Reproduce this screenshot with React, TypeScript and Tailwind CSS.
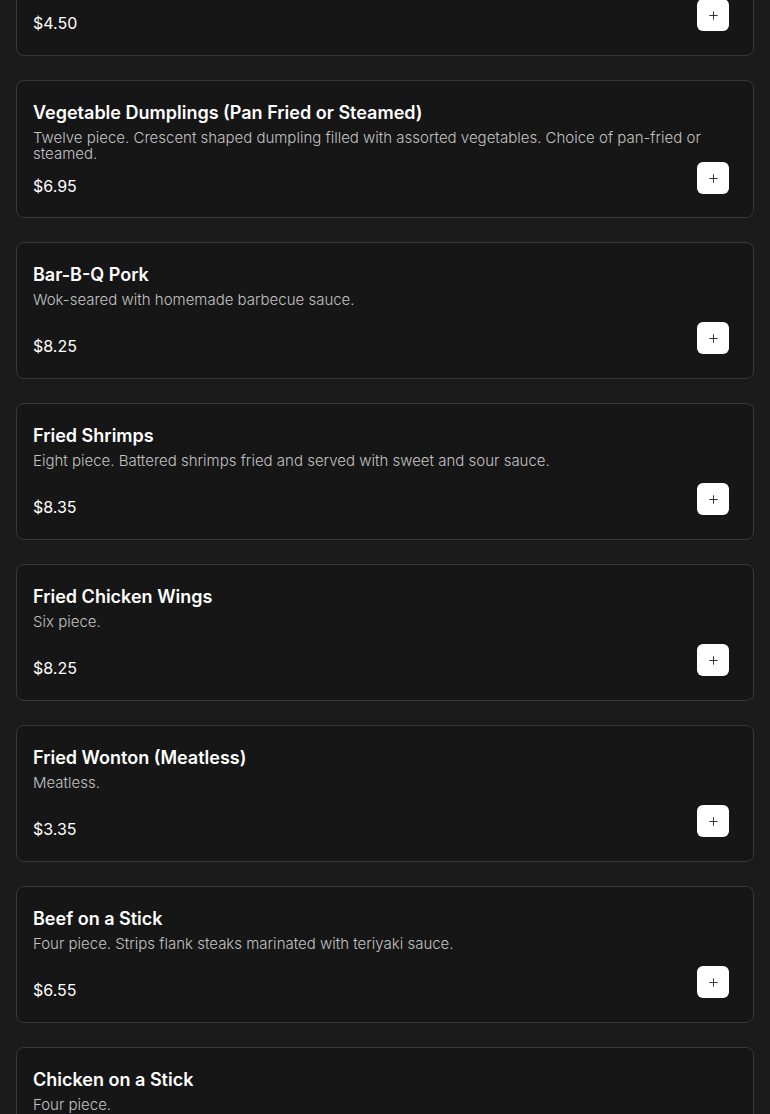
import { Plus } from "lucide-react";

type Item = {
  name: string;
  desc: string;
  price: string;
  tall?: boolean;
};

const items: Item[] = [
  { name: "Egg Rolls", desc: "Two piece.", price: "$4.50" },
  {
    name: "Vegetable Dumplings (Pan Fried or Steamed)",
    desc: "Twelve piece. Crescent shaped dumpling filled with assorted vegetables. Choice of pan-fried or steamed.",
    price: "$6.95",
    tall: true,
  },
  { name: "Bar-B-Q Pork", desc: "Wok-seared with homemade barbecue sauce.", price: "$8.25" },
  {
    name: "Fried Shrimps",
    desc: "Eight piece. Battered shrimps fried and served with sweet and sour sauce.",
    price: "$8.35",
  },
  { name: "Fried Chicken Wings", desc: "Six piece.", price: "$8.25" },
  { name: "Fried Wonton (Meatless)", desc: "Meatless.", price: "$3.35" },
  {
    name: "Beef on a Stick",
    desc: "Four piece. Strips flank steaks marinated with teriyaki sauce.",
    price: "$6.55",
  },
  { name: "Chicken on a Stick", desc: "Four piece.", price: "$7.25" },
];

const MenuCard = ({ item }: { item: Item }) => {
  return (
    <div
      className={
        "flex flex-col rounded-lg border border-[#383838] bg-[#161616] px-4 pt-[17px] pb-4 " +
        (item.tall ? "h-[138px]" : "h-[137px]")
      }
    >
      <h3 className="text-[18px] leading-[30px] font-semibold text-white">{item.name}</h3>
      <p className="mt-[2px] pr-6 text-[15px] leading-4 font-light text-[#c2c2c2]">
        {item.desc}
      </p>
      <div className="mt-auto flex items-end justify-between">
        <span className="mb-[2px] text-base leading-7 text-white">{item.price}</span>
        <button className="mr-2 mb-2 flex h-8 w-8 items-center justify-center rounded-md bg-white text-[#2a2a2a]">
          <Plus size={13} strokeWidth={1.75} />
        </button>
      </div>
    </div>
  );
};

export default function App() {
  return (
    <div className="h-[1114px] overflow-hidden bg-[#1b1b1b] font-['Inter',sans-serif]">
      <div className="-mt-[81px] flex flex-col gap-6 px-4">
        {items.map((item) => (
          <MenuCard key={item.name} item={item} />
        ))}
      </div>
    </div>
  );
}
